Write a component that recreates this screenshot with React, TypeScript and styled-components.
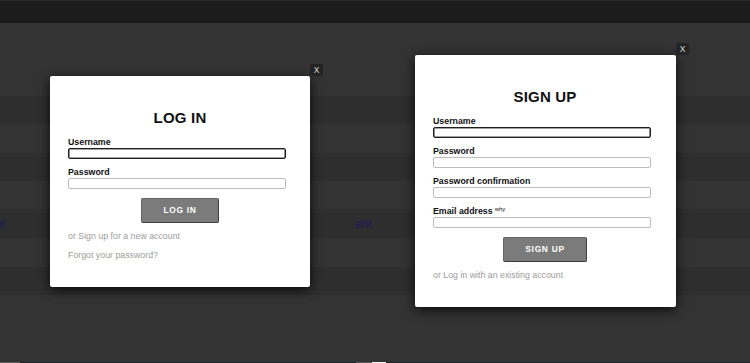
import React from "react";
import styled, { createGlobalStyle } from "styled-components";

const Global = createGlobalStyle`
  html, body { margin: 0; padding: 0; background: #333333; }
  body { font-family: "Liberation Sans", Arial, sans-serif; }
  * { box-sizing: border-box; }
`;

const Page = styled.div`
  position: relative;
  width: 750px;
  height: 363px;
  overflow: hidden;
  display: flex;
  flex-direction: column;
  background: #333333;
`;

const TopBar = styled.div`
  height: 23px;
  flex: none;
  background: #1c1c1c;
  border-top: 1px solid #2c2c2c;
`;

const Header = styled.div`
  height: 73px;
  flex: none;
  background: #333333;
`;

const Row = styled.div<{ $h: number; $dark: boolean }>`
  height: ${(p) => p.$h}px;
  flex: none;
  display: grid;
  grid-template-columns: 355px 1fr;
  align-items: center;
  background: ${(p) => (p.$dark ? "#2e2e2e" : "#333333")};
  font-size: 12px;
  color: #1b1b5c;
  white-space: nowrap;
`;

const Cell = styled.span<{ $indent?: number }>`
  text-indent: ${(p) => p.$indent ?? 0}px;
  padding-top: 1px;
`;

const Footer = styled.div`
  flex: 1;
  background: #333333;
`;

const Strip = styled.div`
  height: 1px;
  flex: none;
  display: grid;
  grid-template-columns: 20px 336px 16px 14px 1fr;
`;

const StripPart = styled.span<{ $c: string }>`
  background: ${(p) => p.$c};
`;

const Dialog = styled.div<{ $x: number; $y: number; $w: number }>`
  position: absolute;
  left: ${(p) => p.$x}px;
  top: ${(p) => p.$y}px;
  width: ${(p) => p.$w}px;
  background: #ffffff;
  border-radius: 2px;
  box-shadow: 0 3px 12px rgba(0, 0, 0, 0.8);
  padding: 33px 0 27px 18px;
  display: flex;
  flex-direction: column;
`;

const Close = styled.div`
  position: absolute;
  top: -12px;
  right: -13px;
  width: 13px;
  height: 12px;
  background: #232323;
  border-radius: 2px;
  color: #dcdcdc;
  font-size: 8.5px;
  line-height: 12px;
  text-align: center;
`;

const Title = styled.h2`
  margin: 0 0 10px;
  width: 218px;
  font-size: 15px;
  line-height: 18px;
  font-weight: bold;
  text-align: center;
  color: #111;
  letter-spacing: 0.2px;
  padding-left: 6px;
`;

const Field = styled.div`
  display: flex;
  flex-direction: column;
  margin-bottom: 8px;
`;

const Label = styled.label`
  font-size: 8.8px;
  line-height: 10px;
  font-weight: bold;
  color: #111;
  margin-bottom: 1px;
`;

const Sup = styled.sup`
  font-size: 6px;
  font-weight: normal;
  vertical-align: top;
  position: relative;
  top: -2px;
  margin-left: 2px;
`;

const Input = styled.div<{ $focus?: boolean }>`
  width: 218px;
  height: 11px;
  border-radius: 2px;
  background: #fff;
  border: 1px solid ${(p) => (p.$focus ? "#1e1e1e" : "#bdbdbd")};
  box-shadow: ${(p) => (p.$focus ? "inset 0 0 0 0.6px #444" : "none")};
`;

const Actions = styled.div`
  width: 218px;
  display: flex;
  justify-content: center;
  padding-left: 6px;
  margin: 1px 0 8px;
`;

const Button = styled.button`
  height: 25px;
  padding: 0 21.5px;
  background: #7b7b7b;
  border: 1px solid #646464;
  border-right-color: #3e3e3e;
  border-bottom-color: #3e3e3e;
  border-radius: 2px;
  color: #fff;
  font-family: "Liberation Sans", Arial, sans-serif;
  font-size: 8.4px;
  font-weight: bold;
  letter-spacing: 0.7px;
  line-height: 23px;
`;

const LinkLine = styled.div<{ $gap?: number }>`
  font-size: 8.8px;
  line-height: 10px;
  color: #9c9c9c;
  margin-top: ${(p) => p.$gap ?? 0}px;
`;

const rows: { h: number; dark: boolean; text?: boolean }[] = [
  { h: 28, dark: true },
  { h: 29, dark: false },
  { h: 28, dark: true },
  { h: 28, dark: false },
  { h: 29, dark: true, text: true },
  { h: 29, dark: false },
  { h: 28, dark: true },
];

export default function App() {
  return (
    <>
      <Global />
      <Page>
        <TopBar />
        <Header />
        {rows.map((r, i) => (
          <Row key={i} $h={r.h} $dark={r.dark}>
            {r.text && (
              <>
                <Cell $indent={-5}>nt</Cell>
                <Cell>ent</Cell>
              </>
            )}
          </Row>
        ))}
        <Footer />
        <Strip>
          <StripPart $c="#5e5e5e" />
          <StripPart $c="#1c262b" />
          <StripPart $c="#5a5a5a" />
          <StripPart $c="#f2f2f2" />
          <StripPart $c="#1c262b" />
        </Strip>

        <Dialog $x={50} $y={76} $w={260}>
          <Close>X</Close>
          <Title>LOG IN</Title>
          <Field>
            <Label>Username</Label>
            <Input $focus />
          </Field>
          <Field>
            <Label>Password</Label>
            <Input />
          </Field>
          <Actions>
            <Button>LOG IN</Button>
          </Actions>
          <LinkLine>or Sign up for a new account</LinkLine>
          <LinkLine $gap={9}>Forgot your password?</LinkLine>
        </Dialog>

        <Dialog $x={415} $y={55} $w={261}>
          <Close>X</Close>
          <Title>SIGN UP</Title>
          <Field>
            <Label>Username</Label>
            <Input $focus />
          </Field>
          <Field>
            <Label>Password</Label>
            <Input />
          </Field>
          <Field>
            <Label>Password confirmation</Label>
            <Input />
          </Field>
          <Field>
            <Label>
              Email address<Sup>why</Sup>
            </Label>
            <Input />
          </Field>
          <Actions>
            <Button>SIGN UP</Button>
          </Actions>
          <LinkLine>or Log in with an existing account</LinkLine>
        </Dialog>
      </Page>
    </>
  );
}
